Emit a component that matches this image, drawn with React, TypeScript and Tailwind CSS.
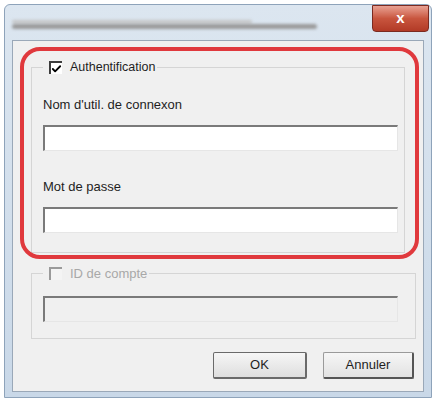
import { Check } from "lucide-react";

function Field({ disabled = false }: { disabled?: boolean }) {
  return (
    <div
      className={
        "h-[26px] w-[355px] border-t-2 border-l-2 border-r border-b border-t-[#7a7a7a] border-l-[#7a7a7a] border-r-[#e6e6e6] border-b-[#e6e6e6] " +
        (disabled ? "bg-[#f0f0f0]" : "bg-white")
      }
    />
  );
}

function Box({ checked, disabled }: { checked: boolean; disabled?: boolean }) {
  return (
    <span
      className={
        "flex h-[13px] w-[13px] items-center justify-center border-t-2 border-l-2 " +
        (disabled
          ? "border-t-[#9a9a9a] border-l-[#9a9a9a] bg-[#f4f4f4]"
          : "border-t-[#3c3c3c] border-l-[#3c3c3c] bg-white")
      }
    >
      {checked && <Check size={12} strokeWidth={4} className="text-black" />}
    </span>
  );
}

export default function App() {
  return (
    <div className="h-[401px] w-[437px] bg-white pl-[4px] pt-[4px] font-['Liberation_Sans',Arial,sans-serif] text-[13px] text-[#1e1e1e]">
      <div className="flex h-[394px] w-[428px] flex-col rounded-t-[6px] border border-[#8ea3ba] bg-gradient-to-b from-[#dce6f0] to-[#c9d8e8]">
        {/* title bar */}
        <div className="flex h-[35px] shrink-0 items-start justify-between pl-[7px] pr-[2px]">
          <div className="mt-[15px] flex flex-col gap-[1px] blur-[1.5px]">
            <div className="h-[3px] w-[240px] rounded bg-[#c4c4c4]" />
            <div className="h-[5px] w-[305px] rounded bg-[#9a9a9a]" />
          </div>
          <div className="flex h-[27px] w-[57px] items-center justify-center rounded-b-[4px] border border-[#7b2a20] bg-gradient-to-b from-[#e8a193] via-[#c8553e] to-[#b23a26] text-[15px] font-bold text-white">
            x
          </div>
        </div>

        {/* client area */}
        <div className="relative mx-[7px] mb-[5px] flex-1 border border-[#9aa8b8] bg-[#f0f0f0]">
          <div className="pointer-events-none absolute left-[7px] top-[6px] h-[212px] w-[399px] rounded-[20px] border-[4px] border-[#e0393d]" />

          {/* Authentification group */}
          <div className="ml-[18px] mt-[26px] h-[186px] w-[374px] border border-[#d5d5d5] pl-[11px]">
            <div className="-mt-[8px] flex w-fit items-center gap-[8px] bg-[#f0f0f0] pl-[6px] pr-[2px]">
              <Box checked />
              <span className="whitespace-nowrap text-[12.5px] leading-[15px]">Authentification</span>
            </div>
            <div className="mt-[22px] leading-[15px]">Nom d'util. de connexon</div>
            <div className="mt-[13px]">
              <Field />
            </div>
            <div className="mt-[28px] leading-[15px]">Mot de passe</div>
            <div className="mt-[13px]">
              <Field />
            </div>
          </div>

          {/* ID de compte group */}
          <div className="ml-[18px] mt-[20px] h-[66px] w-[385px] border border-[#d5d5d5] pl-[11px]">
            <div className="-mt-[8px] flex w-fit items-center gap-[8px] bg-[#f0f0f0] pl-[6px] pr-[2px] text-[#a8a8a8]">
              <Box checked={false} disabled />
              <span className="leading-[15px]">ID de compte</span>
            </div>
            <div className="mt-[15px]">
              <Field disabled />
            </div>
          </div>

          {/* buttons */}
          <div className="mt-[13px] flex justify-end gap-[16px] pr-[9px]">
            <button className="h-[27px] w-[94px] rounded-[2px] border border-[#6a6a6a] border-r-2 border-b-2 bg-gradient-to-b from-[#f6f6f6] to-[#dedede] text-[13px]">
              OK
            </button>
            <button className="h-[27px] w-[91px] rounded-[2px] border border-[#9a9a9a] border-r-2 border-b-2 border-r-[#555] border-b-[#555] bg-gradient-to-b from-[#f6f6f6] to-[#e2e2e2] text-[13px]">
              Annuler
            </button>
          </div>
        </div>
      </div>
    </div>
  );
}
